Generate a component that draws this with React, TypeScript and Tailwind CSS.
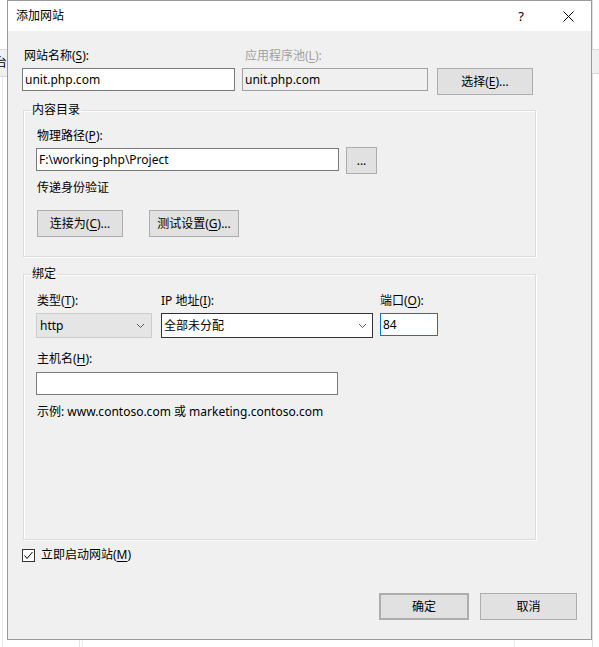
import React from 'react';

// Access-key letter, underlined like a Win32 label
const Key = ({ k }: { k: string }) => <u className="underline underline-offset-[2px]">{k}</u>;

const Chevron = () => (
  <svg width="9" height="6" viewBox="0 0 9 6" className="shrink-0">
    <polyline points="1,1 4.5,4.5 8,1" fill="none" stroke="#5a5a5a" strokeWidth="1" />
  </svg>
);

const Button = ({ children, className = '' }: { children: React.ReactNode; className?: string }) => (
  <div
    className={`h-[27px] flex items-center justify-center bg-[#e1e1e1] border border-[#adadad] leading-[16px] ${className}`}
  >
    {children}
  </div>
);

const TextBox = ({ value, className = '' }: { value?: string; className?: string }) => (
  <div className={`h-[23px] flex items-center px-[2px] bg-white border border-[#7a7a7a] leading-[16px] ${className}`}>
    {value}
  </div>
);

const Label = ({ children, className = '' }: { children: React.ReactNode; className?: string }) => (
  <div className={`h-[16px] leading-[16px] whitespace-nowrap ${className}`}>{children}</div>
);

const Group = ({ title, children, className = '' }: { title: string; children: React.ReactNode; className?: string }) => (
  <fieldset
    className={`ml-[1px] w-[513px] border border-[#dcdcdc] shadow-[inset_1px_1px_0_#ffffff,1px_1px_0_#ffffff] ${className}`}
  >
    <legend className="ml-[7px] px-[1px] h-[16px] leading-[16px]">{title}</legend>
    {children}
  </fieldset>
);

const AddSiteDialog = () => (
  <div className="w-[585px] h-[640px] flex flex-col border border-[#9a9a9a] bg-[#f0f0f0]">
    {/* title bar */}
    <div className="h-[30px] bg-white flex items-center pl-[8px] pr-[17px]">
      <span className="leading-[16px]">添加网站</span>
      <span className="ml-auto leading-[16px] text-[13px]">?</span>
      <svg width="11" height="11" viewBox="0 0 11 11" className="ml-[39px]">
        <line x1="0.5" y1="0.5" x2="10.5" y2="10.5" stroke="#000" strokeWidth="1" />
        <line x1="10.5" y1="0.5" x2="0.5" y2="10.5" stroke="#000" strokeWidth="1" />
      </svg>
    </div>

    <div className="flex-1 flex flex-col pl-[14px] pt-[17px]">
      {/* site name / app pool */}
      <div className="flex items-start">
        <div className="w-[213px] flex flex-col">
          <Label className="pl-[2px]">
            网站名称(<Key k="S" />):
          </Label>
          <TextBox value="unit.php.com" className="mt-[4px]" />
        </div>
        <div className="w-[186px] ml-[7px] flex flex-col">
          <Label className="pl-[3px] text-[#a0a0a0]">
            应用程序池(<Key k="L" />):
          </Label>
          <div className="mt-[4px] h-[23px] flex items-center px-[2px] border border-[#a0a0a0] bg-[#f0f0f0] leading-[16px]">
            unit.php.com
          </div>
        </div>
        <Button className="w-[96px] ml-[9px] mt-[20px]">
          选择(<Key k="E" />)...
        </Button>
      </div>

      {/* content directory */}
      <Group title="内容目录" className="mt-[7px] pb-[19px]">
        <div className="flex flex-col pl-[12px] pt-[10px]">
          <Label className="pl-[1px]">
            物理路径(<Key k="P" />):
          </Label>
          <div className="flex items-start mt-[3px]">
            <TextBox value="F:\working-php\Project" className="w-[303px] mt-[1px]" />
            <Button className="w-[31px] ml-[7px]">...</Button>
          </div>
          <Label className="pl-[1px] mt-[6px]">传递身份验证</Label>
          <div className="flex mt-[14px] pl-[1px] gap-[26px]">
            <Button className="w-[86px]">
              连接为(<Key k="C" />)...
            </Button>
            <Button className="w-[90px]">
              测试设置(<Key k="G" />)...
            </Button>
          </div>
        </div>
      </Group>

      {/* bindings */}
      <Group title="绑定" className="mt-[9px] h-[274px]">
        <div className="flex flex-col pl-[12px] pt-[11px]">
          <div className="flex items-start">
            <div className="w-[116px] flex flex-col">
              <Label className="pl-[1px]">
                类型(<Key k="T" />):
              </Label>
              <div className="mt-[4px] h-[25px] flex items-center pl-[3px] pr-[6px] bg-[#e5e5e5] border border-[#cccccc] leading-[16px]">
                <span>http</span>
                <span className="ml-auto">
                  <Chevron />
                </span>
              </div>
            </div>
            <div className="w-[212px] ml-[9px] flex flex-col">
              <Label>
                IP 地址(<Key k="I" />):
              </Label>
              <div className="mt-[4px] h-[25px] flex items-center pl-[2px] pr-[5px] bg-white border border-[#333333] leading-[16px]">
                <span>全部未分配</span>
                <span className="ml-auto">
                  <Chevron />
                </span>
              </div>
            </div>
            <div className="w-[58px] ml-[7px] flex flex-col">
              <Label>
                端口(<Key k="O" />):
              </Label>
              <TextBox value="84" className="mt-[4px] border-[#0078d7]" />
            </div>
          </div>
          <Label className="pl-[1px] mt-[13px]">
            主机名(<Key k="H" />):
          </Label>
          <TextBox className="w-[302px] mt-[5px]" />
          <Label className="pl-[1px] mt-[9px]">示例: www.contoso.com 或 marketing.contoso.com</Label>
        </div>
      </Group>

      {/* start immediately */}
      <div className="flex items-center mt-[7px] h-[16px]">
        <div className="w-[13px] h-[13px] border border-[#333333] bg-white flex items-center justify-center">
          <svg width="11" height="11" viewBox="0 0 11 11">
            <polyline points="1.5,5.5 4,8.5 9.5,2" fill="none" stroke="#000" strokeWidth="1" />
          </svg>
        </div>
        <span className="ml-[6px] leading-[16px]">
          立即启动网站(<Key k="M" />)
        </span>
      </div>

      {/* dialog buttons */}
      <div className="flex justify-end pr-[14px] mt-[30px] gap-[11px]">
        <Button className="w-[90px] border-2 border-[#0078d7]">确定</Button>
        <Button className="w-[97px]">取消</Button>
      </div>
    </div>
  </div>
);

export default function App() {
  return (
    <div className="w-[599px] h-[647px] flex bg-white overflow-hidden text-[12px] text-black font-['Noto_Sans','Noto_Sans_CJK_SC',sans-serif]">
      {/* window behind, left edge */}
      <div className="w-[7px] h-full flex flex-col overflow-hidden">
        <div className="h-[49px]" />
        <div className="h-[28px] bg-[#f0f0f0] border-y border-[#d9d9d9] flex items-center overflow-hidden">
          <span className="-ml-[5px] leading-[16px]">台</span>
        </div>
        <div className="flex-1 ml-[2px] border-l border-[#e6e6e6]" />
      </div>

      <div className="w-[585px] h-full flex flex-col">
        <AddSiteDialog />
        <div className="flex-1 flex">
          <div className="w-[73px] border-r border-[#e3e3e3]" />
          <div className="w-[3px] border-r border-[#ededed]" />
          <div className="w-[432px] border-r border-[#ededed]" />
        </div>
      </div>

      {/* window behind, right edge */}
      <div className="flex-1 h-full flex flex-col">
        <div className="h-[49px] border-l border-[#e0e0e0]" />
        <div className="h-[25px] bg-[#f0f0f0] border-y border-[#d9d9d9]" />
        <div className="flex-1 border-l border-[#e0e0e0]" />
      </div>
    </div>
  );
}
